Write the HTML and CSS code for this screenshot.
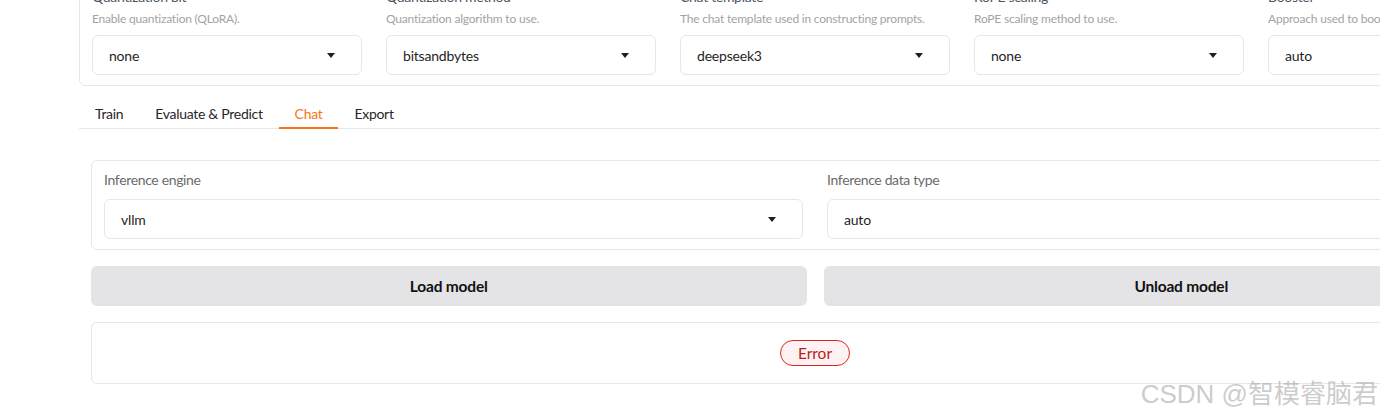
FILE: index.html
```html
<!DOCTYPE html>
<html>
<head>
<meta charset="utf-8">
<link rel="stylesheet" href="styles.css">
</head>
<body>
<div class="app">
  <div class="config">
    <div class="field">
      <div class="label">Quantization bit</div>
      <div class="desc">Enable quantization (QLoRA).</div>
      <div class="select"><span>none</span><i class="caret"></i></div>
    </div>
    <div class="field">
      <div class="label">Quantization method</div>
      <div class="desc">Quantization algorithm to use.</div>
      <div class="select"><span>bitsandbytes</span><i class="caret"></i></div>
    </div>
    <div class="field">
      <div class="label">Chat template</div>
      <div class="desc">The chat template used in constructing prompts.</div>
      <div class="select"><span>deepseek3</span><i class="caret"></i></div>
    </div>
    <div class="field">
      <div class="label">RoPE scaling</div>
      <div class="desc">RoPE scaling method to use.</div>
      <div class="select"><span>none</span><i class="caret"></i></div>
    </div>
    <div class="field">
      <div class="label">Booster</div>
      <div class="desc">Approach used to boost training speed.</div>
      <div class="select"><span>auto</span><i class="caret"></i></div>
    </div>
  </div>

  <div class="tabs">
    <div class="tab">Train</div>
    <div class="tab">Evaluate &amp; Predict</div>
    <div class="tab active">Chat</div>
    <div class="tab">Export</div>
  </div>

  <div class="panel">
    <div class="card infer">
      <div class="ifield">
        <div class="ilabel">Inference engine</div>
        <div class="select"><span>vllm</span><i class="caret"></i></div>
      </div>
      <div class="ifield">
        <div class="ilabel">Inference data type</div>
        <div class="select"><span>auto</span><i class="caret"></i></div>
      </div>
    </div>
    <div class="buttons">
      <button class="btn">Load model</button>
      <button class="btn">Unload model</button>
    </div>
    <div class="card status">
      <span class="badge">Error</span>
    </div>
  </div>
</div>
<div class="watermark">CSDN @智模睿脑君</div>
</body>
</html>
```

FILE: styles.css
```css
html, body {
  margin: 0;
  padding: 0;
  background: #ffffff;
  overflow: hidden;
  width: 1380px;
  height: 415px;
}
body {
  font-family: "Lato", "Noto Sans", sans-serif;
  color: #1f2937;
  position: relative;
}
.app {
  width: 1472px;
  margin-left: 79px;
  margin-top: -24px;
}
.config {
  display: grid;
  grid-template-columns: repeat(5, 270px);
  column-gap: 24px;
  border: 1px solid #e5e7eb;
  border-radius: 6px;
  padding: 10px 12px 10px 12px;
}
.label {
  font-size: 14px;
  line-height: 20px;
  color: #4b5563;
  letter-spacing: -0.3px;
}
.desc {
  font-size: 12px;
  line-height: 18px;
  color: #a3a3a3;
  margin: 3px 0 7px 0;
  white-space: nowrap;
  overflow: hidden;
  letter-spacing: -0.2px;
}
.select {
  height: 40px;
  box-sizing: border-box;
  border: 1px solid #e5e7eb;
  border-radius: 6px;
  display: flex;
  align-items: center;
  justify-content: space-between;
  padding: 0 26px 0 16px;
  font-size: 14px;
  color: #1f1f1f;
  background: #fff;
  letter-spacing: -0.2px;
}
.caret {
  width: 0;
  height: 0;
  border-left: 4.5px solid transparent;
  border-right: 4.5px solid transparent;
  border-top: 5px solid #1f1f1f;
}
.tabs {
  display: flex;
  margin-top: 13px;
  border-bottom: 1px solid #e5e7eb;
}
.tab {
  height: 30px;
  line-height: 30px;
  padding: 0 16px;
  font-size: 14px;
  color: #27272a;
  box-sizing: border-box;
  margin-bottom: -1px;
  letter-spacing: -0.3px;
}
.tab.active {
  color: #f97316;
  border-bottom: 2px solid #f97316;
  line-height: 29px;
}
.panel {
  padding: 31px 12px 0 12px;
}
.card {
  border: 1px solid #e5e7eb;
  border-radius: 6px;
}
.infer {
  display: grid;
  grid-template-columns: 1fr 1fr;
  column-gap: 24px;
  padding: 9px 12px 10px 12px;
}
.ilabel {
  font-size: 14px;
  line-height: 20px;
  color: #6b6b6b;
  margin-bottom: 9px;
  letter-spacing: -0.35px;
}
.buttons {
  display: grid;
  grid-template-columns: 1fr 1fr;
  column-gap: 17px;
  margin-top: 16px;
}
.btn {
  height: 40px;
  border: none;
  border-radius: 6px;
  background: #e4e4e7;
  font-family: inherit;
  font-size: 15.5px;
  font-weight: 700;
  color: #111111;
  letter-spacing: -0.2px;
}
.status {
  margin-top: 16px;
  height: 62px;
  box-sizing: border-box;
  display: flex;
  align-items: center;
  justify-content: center;
}
.badge {
  width: 70px;
  height: 26px;
  box-sizing: border-box;
  border: 1px solid #dc2626;
  border-radius: 13px;
  background: #fef2f2;
  color: #b91c1c;
  font-size: 15.5px;
  display: flex;
  align-items: center;
  justify-content: center;
}
.watermark {
  position: absolute;
  right: 2px;
  top: 373px;
  font-family: "Liberation Sans", "Noto Sans CJK SC", sans-serif;
  font-size: 26px;
  color: rgba(160, 160, 160, 0.55);
  white-space: nowrap;
}
```
